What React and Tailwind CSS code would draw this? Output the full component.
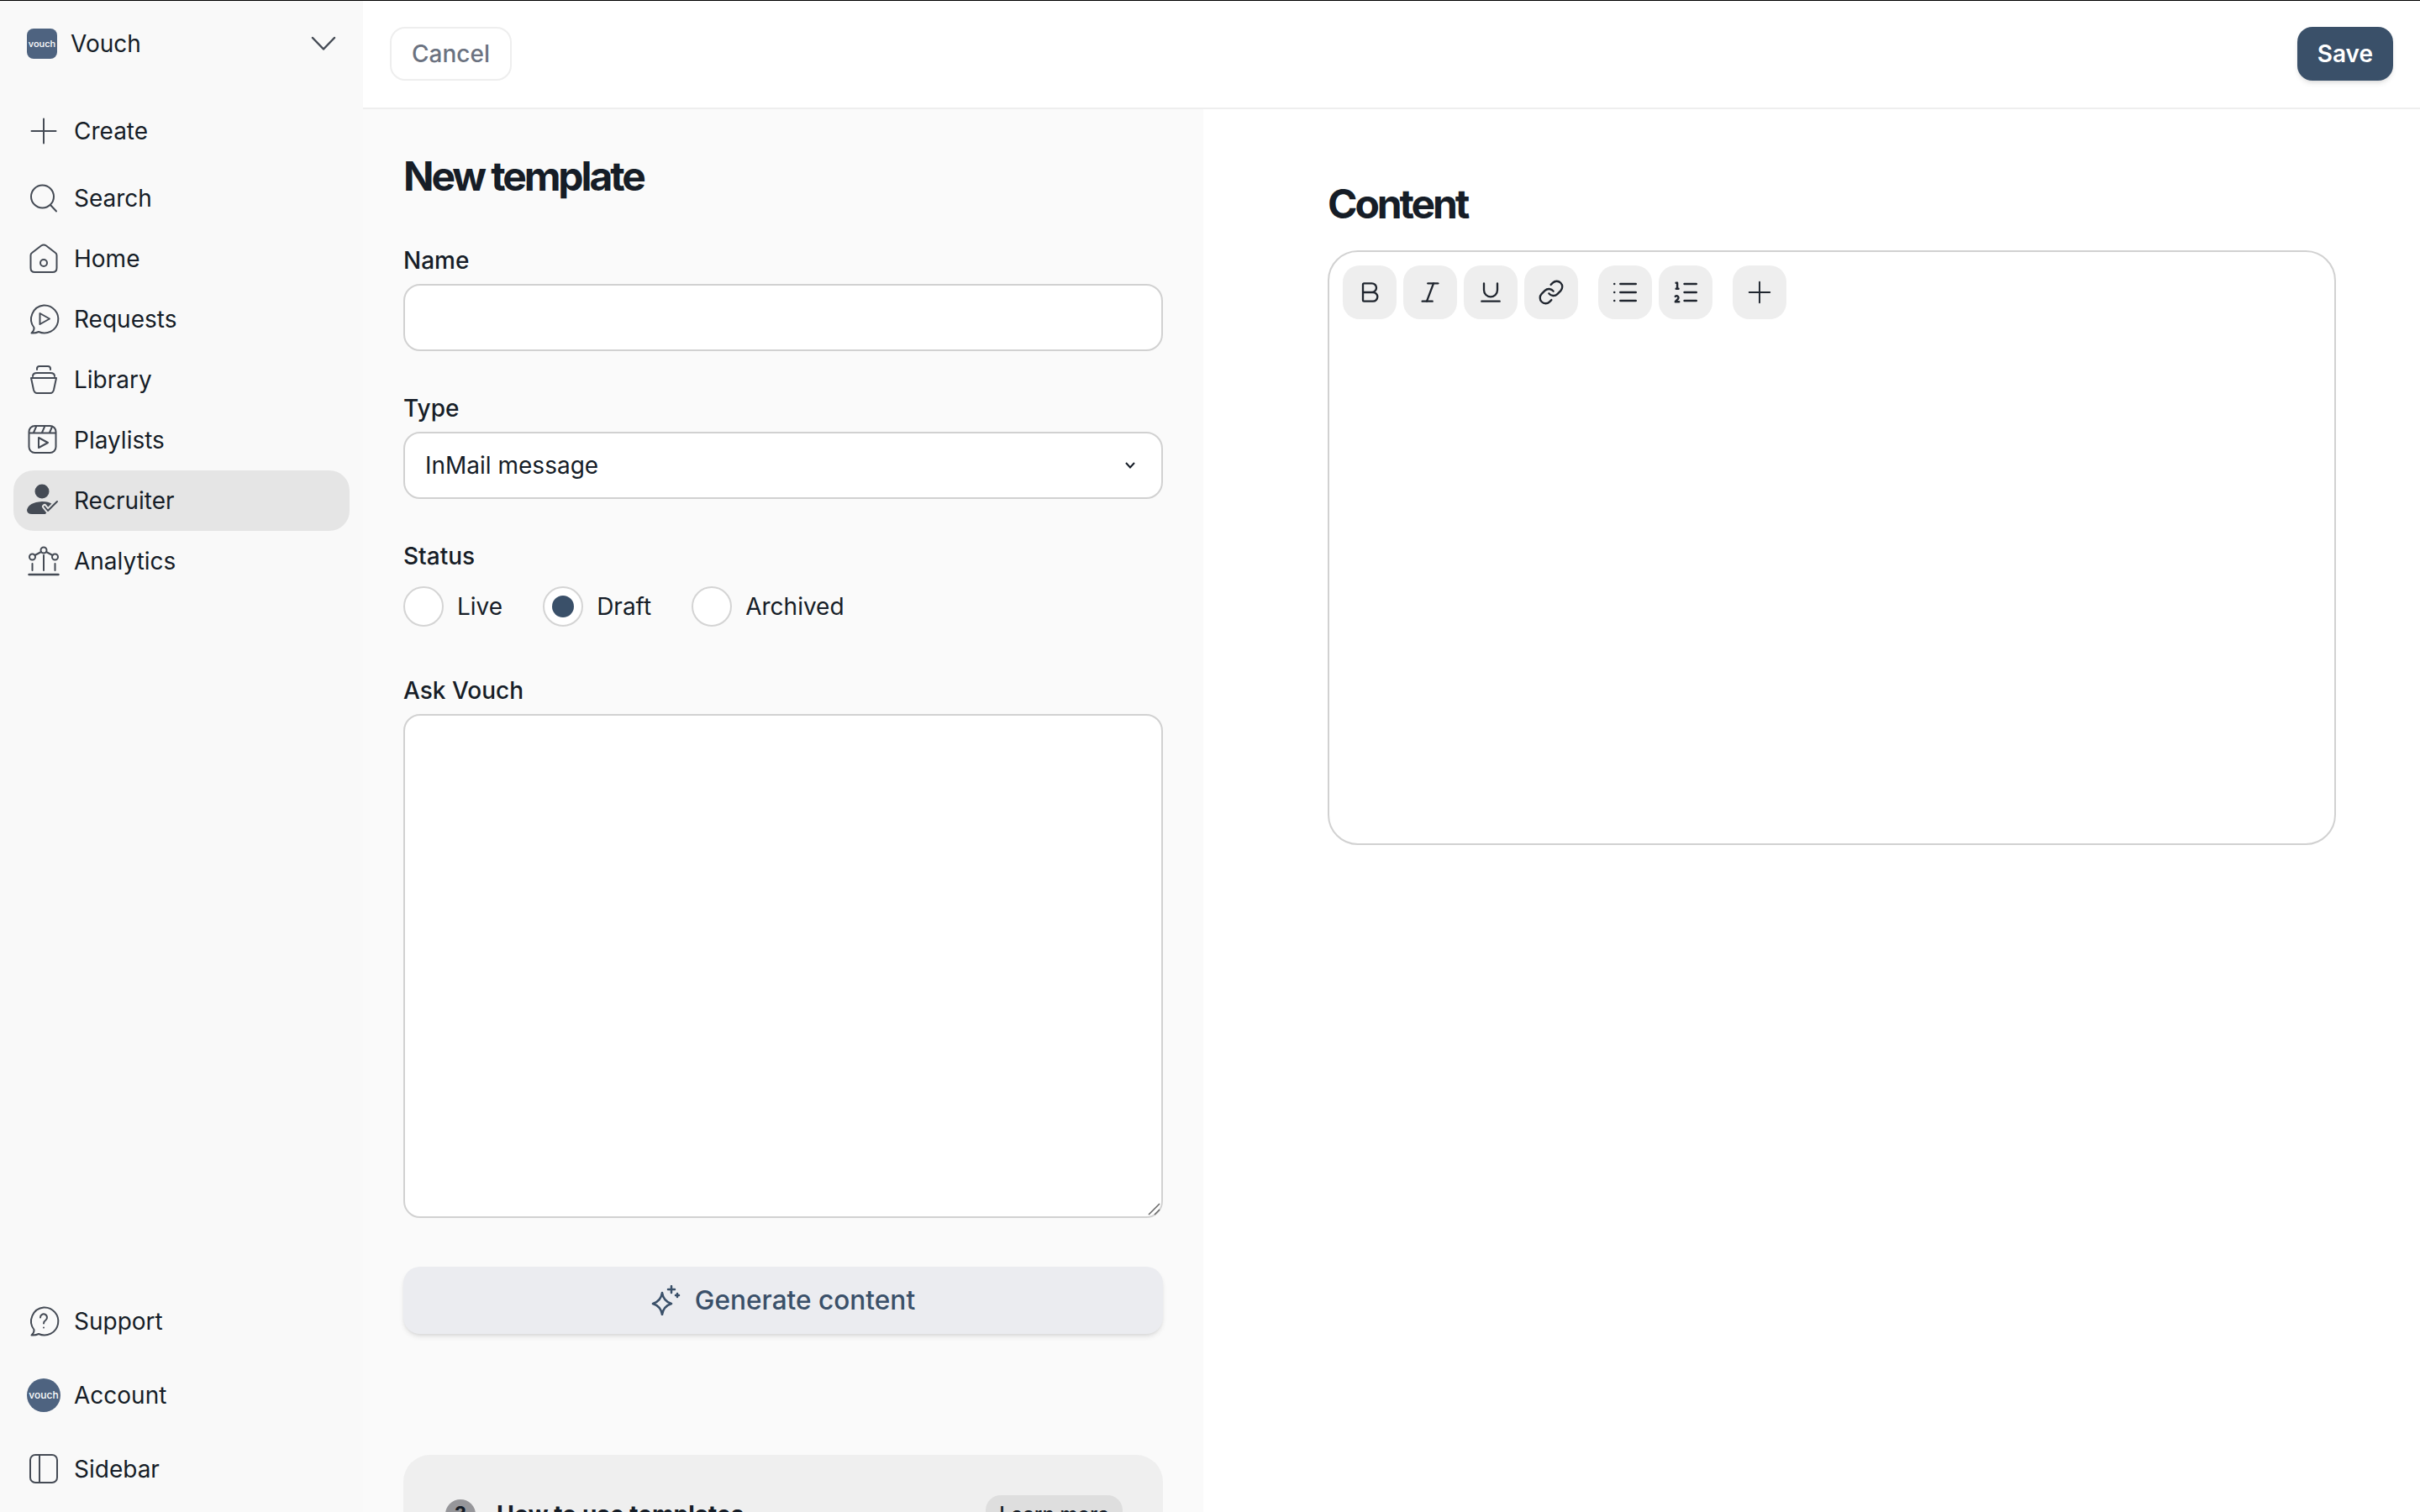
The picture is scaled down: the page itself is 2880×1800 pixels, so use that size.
import React from 'react';
import { Bold, Italic, Underline, Link, List, ListOrdered, Plus } from 'lucide-react';

const Icon = ({ children, className = '' }) => (
  <svg width="36" height="36" viewBox="0 0 36 36" fill="none" stroke="#454b55" strokeWidth="2" strokeLinecap="round" strokeLinejoin="round" className={`shrink-0 overflow-visible ${className}`}>
    {children}
  </svg>
);

const navIcons = {
  create: <path d="M18 3.5V32.5M3.5 18H32.5" />,
  search: (
    <>
      <circle cx="16.5" cy="16" r="13.5" />
      <path d="M26 26L33 33.5" />
    </>
  ),
  home: (
    <>
      <path d="M4 11L15 2.5Q18 0.5 21 2.5L32 11Q33.5 12 33.5 14V29Q33.5 34 28.5 34H7.5Q2.5 34 2.5 29V14Q2.5 12 4 11Z" />
      <circle cx="18" cy="23" r="4" />
    </>
  ),
  requests: (
    <>
      <path d="M18 1.5A16.5 16.5 0 1 1 12 33Q8 35 3.5 34.5Q7 31.5 6.5 28A16.5 16.5 0 0 1 18 1.5Z" />
      <path d="M13.5 11L25 17.5L13.5 24Z" />
    </>
  ),
  library: (
    <>
      <path d="M10 6V5Q10 2 13 2H23Q26 2 26 5V6" />
      <path d="M5 14Q5 10 10 10H26Q31 10 31 14" />
      <path d="M3 16H33L30 30Q29 34 26 34H10Q7 34 6 30Z" />
    </>
  ),
  playlists: (
    <>
      <rect x="0.5" y="1" width="32" height="32" rx="7" />
      <path d="M1 9.5H32M9 2L6 9M19 2L16 9M28 2L25 9" />
      <path d="M12 15L23 21L12 27Z" />
    </>
  ),
  recruiter: (
    <>
      <circle cx="16" cy="7" r="8.5" fill="#454b55" stroke="none" />
      <path d="M-2 29Q0 20 16 19Q24 19 28 22L20 34H4Q-2 34 -2 29Z" fill="#454b55" stroke="none" />
      <path d="M19 25L23 30L34 19" stroke="#e5e5e5" strokeWidth="6" />
      <path d="M19 25L23 30L34 19" />
    </>
  ),
  analytics: (
    <>
      <circle cx="4.5" cy="13" r="3.5" />
      <circle cx="18" cy="5" r="3.5" />
      <circle cx="31.5" cy="13" r="3.5" />
      <path d="M7.5 11L15 7M21 7L28.5 11M4.5 21V29M18 11V29M31.5 21V29" />
      <path d="M0.5 34H35.5" strokeWidth="2.5" />
    </>
  ),
  support: (
    <>
      <path d="M18 1.5A16.5 16.5 0 1 1 12 33Q8 35 3.5 34.5Q7 31.5 6.5 28A16.5 16.5 0 0 1 18 1.5Z" />
      <path d="M14 13.5A4 4 0 1 1 20.5 16.5Q18 18 18 20.5M18 25.5V25.6" />
    </>
  ),
  sidebar: (
    <>
      <rect x="2" y="1" width="32" height="33" rx="6" />
      <path d="M13 1.5V33.5" />
    </>
  ),
};

const NavRow = ({ icon, label, active }) => (
  <div className={`flex h-[72px] items-center gap-[18px] rounded-[24px] pl-[18px] ${active ? 'bg-[#e5e5e5]' : ''}`}>
    <Icon>{navIcons[icon]}</Icon>
    <span>{label}</span>
  </div>
);

const Field = ({ label, children, className = '' }) => (
  <div className={className}>
    <div className="leading-[36px] font-medium text-[#161d27]">{label}</div>
    {children}
  </div>
);

const Radio = ({ label, checked }) => (
  <div className="flex items-center gap-4">
    <div className="flex h-12 w-12 items-center justify-center rounded-full border-2 border-[#d4d4d4] bg-white">
      {checked && <div className="h-[26px] w-[26px] rounded-full bg-[#3a5069]" />}
    </div>
    <span>{label}</span>
  </div>
);

const ToolButton = ({ children }) => (
  <button className="flex h-16 w-16 items-center justify-center rounded-[20px] bg-[#eeeeee] text-[#20262f]">{children}</button>
);

const inputClass = 'mt-[10px] block w-full rounded-[20px] border-2 border-[#d1d1d1] bg-white';

export default function App() {
  return (
    <div className="flex h-screen flex-col overflow-hidden border-t border-black bg-white font-['Inter',sans-serif] text-[28px] leading-[36px] text-[#161d27]">
      <div className="flex min-h-0 flex-1">
        {/* sidebar */}
        <aside className="flex w-[432px] shrink-0 flex-col bg-[#f9f9f9] px-4 pb-[15px]">
          <div className="flex h-[102px] shrink-0 items-center pr-[16px] pl-4">
            <div className="flex h-9 w-9 items-center justify-center rounded-lg bg-[#4e6380] text-[11px] font-medium text-white">vouch</div>
            <span className="ml-4 flex-1">Vouch</span>
            <svg width="30" height="18" viewBox="0 0 30 18" fill="none" stroke="#454b55" strokeWidth="2.5" strokeLinecap="round" strokeLinejoin="round">
              <path d="M2 2L15 15.5L28 2" />
            </svg>
          </div>
          <div className="mt-[17px] shrink-0">
            <NavRow icon="create" label="Create" />
          </div>
          <nav className="mt-2 shrink-0">
            <NavRow icon="search" label="Search" />
            <NavRow icon="home" label="Home" />
            <NavRow icon="requests" label="Requests" />
            <NavRow icon="library" label="Library" />
            <NavRow icon="playlists" label="Playlists" />
            <NavRow icon="recruiter" label="Recruiter" active />
            <NavRow icon="analytics" label="Analytics" />
          </nav>
          <div className="mt-auto flex shrink-0 flex-col gap-4">
            <NavRow icon="support" label="Support" />
            <div className="flex h-[72px] items-center gap-4 pl-4">
              <div className="flex h-10 w-10 items-center justify-center rounded-full bg-[#4e6380] text-[12px] font-medium text-white">vouch</div>
              <span>Account</span>
            </div>
            <NavRow icon="sidebar" label="Sidebar" />
          </div>
        </aside>

        <div className="flex min-w-0 flex-1 flex-col">
          {/* top bar */}
          <header className="flex h-[129px] shrink-0 items-center justify-between border-b-2 border-[#eeeeee] pr-8 pb-[2px] pl-8">
            <button className="h-16 rounded-[18px] border-2 border-[#eeeeee] px-6 font-medium text-[#6b7280]">Cancel</button>
            <button className="h-16 rounded-[18px] bg-[#3a5069] px-6 font-semibold text-white shadow-md">Save</button>
          </header>

          <div className="flex min-h-0 flex-1">
            {/* form panel */}
            <section className="w-[1000px] shrink-0 overflow-hidden bg-[#fafafa] pt-[48px] pr-12 pl-12">
              <h1 className="text-[48px] leading-[64px] font-bold tracking-[-0.065em] text-[#161d27]">New template</h1>
              <Field label="Name" className="mt-[50px]">
                <input className={`${inputClass} h-20`} />
              </Field>
              <Field label="Type" className="mt-[50px]">
                <div className={`${inputClass} flex h-20 items-center justify-between pr-[30px] pl-6`}>
                  <span>InMail message</span>
                  <svg width="14" height="10" viewBox="0 0 14 10" fill="none" stroke="#161d27" strokeWidth="2">
                    <path d="M2 2L7 7.5L12 2" />
                  </svg>
                </div>
              </Field>
              <Field label="Status" className="mt-[50px]">
                <div className="mt-[18px] flex gap-[48px]">
                  <Radio label="Live" />
                  <Radio label="Draft" checked />
                  <Radio label="Archived" />
                </div>
              </Field>
              <Field label="Ask Vouch" className="mt-[58px]">
                <div className="relative">
                  <textarea className={`${inputClass} h-[600px] resize-none`} />
                  <svg width="16" height="16" viewBox="0 0 16 16" fill="none" stroke="#666666" strokeWidth="1.5" className="absolute right-[3px] bottom-[3px]">
                    <path d="M2 15L15 2M9 15L15 9" />
                  </svg>
                </div>
              </Field>
              <button className="mt-[58px] flex h-20 w-full items-center justify-center gap-4 rounded-[20px] bg-[#ebecf0] text-[31.6px] font-medium text-[#3a5069] shadow-md">
                <svg width="36" height="36" viewBox="0 0 36 36" fill="none" stroke="#3a5069" strokeWidth="2.5" strokeLinecap="round" strokeLinejoin="round">
                  <path d="M13 9Q14.5 19 24 22Q14.5 25 13 35Q11.5 25 2 22Q11.5 19 13 9Z" />
                  <path d="M24 1V9M20 5H28M31 10V14M29 12H33" />
                </svg>
                Generate content
              </button>
              <div className="mt-[144px] rounded-[32px] bg-[#efefef] pt-12 pr-[48px] pb-12 pl-[50px]">
                <div className="flex items-start justify-between">
                  <div className="mt-[5px] flex items-center gap-[25px]">
                    <div className="flex h-9 w-9 items-center justify-center rounded-full bg-[#96969a] text-[24px] font-bold text-[#161d27]">?</div>
                    <span className="font-bold">How to use templates</span>
                  </div>
                  <button className="h-[46px] rounded-[18px] bg-[#dedede] px-4 text-[24px] font-medium">Learn more</button>
                </div>
              </div>
            </section>

            {/* content panel */}
            <section className="min-w-0 flex-1 pt-[81px] pr-[100px] pl-[148px]">
              <h2 className="text-[48px] leading-[64px] font-bold tracking-[-0.065em] text-[#161d27]">Content</h2>
              <div className="mt-[23px] h-[708px] rounded-[36px] border-2 border-[#d1d1d1] px-4 py-4">
                <div className="flex gap-6">
                  <div className="flex gap-2">
                    <ToolButton><Bold size={32} strokeWidth={1.75} /></ToolButton>
                    <ToolButton><Italic size={32} strokeWidth={1.75} /></ToolButton>
                    <ToolButton><Underline size={32} strokeWidth={1.75} /></ToolButton>
                    <ToolButton><Link size={32} strokeWidth={1.75} /></ToolButton>
                  </div>
                  <div className="flex gap-2">
                    <ToolButton><List size={34} strokeWidth={1.75} /></ToolButton>
                    <ToolButton><ListOrdered size={34} strokeWidth={1.75} /></ToolButton>
                  </div>
                  <ToolButton><Plus size={42} strokeWidth={1.1} /></ToolButton>
                </div>
              </div>
            </section>
          </div>
        </div>
      </div>
    </div>
  );
}
